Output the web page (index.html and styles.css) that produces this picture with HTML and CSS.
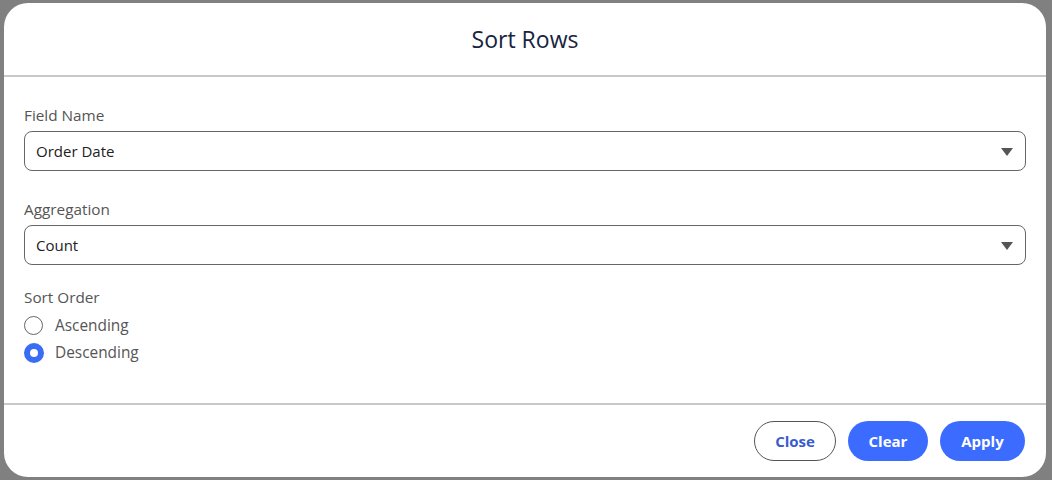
FILE: index.html
```html
<!DOCTYPE html>
<html lang="en">
<head>
    <meta charset="UTF-8">
    <meta name="viewport" content="width=device-width, initial-scale=1.0">
    <title>Sort Rows</title>
    <link rel="stylesheet" href="styles.css">
</head>
<body>
    <div class="dialog">
        <div class="dialog-header">
            <h1>Sort Rows</h1>
        </div>
        <div class="dialog-body">
            <label class="field-label" for="fieldName">Field Name</label>
            <div class="select-box" id="fieldName">
                <span>Order Date</span>
                <span class="caret"></span>
            </div>

            <label class="field-label gap-lg" for="aggregation">Aggregation</label>
            <div class="select-box" id="aggregation">
                <span>Count</span>
                <span class="caret"></span>
            </div>

            <div class="field-label gap-md">Sort Order</div>
            <div class="radio-row">
                <span class="radio"></span>
                <span>Ascending</span>
            </div>
            <div class="radio-row">
                <span class="radio checked"></span>
                <span>Descending</span>
            </div>
        </div>
        <div class="dialog-footer">
            <button class="btn btn-outline">Close</button>
            <button class="btn btn-primary">Clear</button>
            <button class="btn btn-primary">Apply</button>
        </div>
    </div>
</body>
</html>
```

FILE: styles.css
```css
body {
    font-family: "Open Sans", "Noto Sans", sans-serif;
    background-color: #808080;
    margin: 0;
    padding: 3px 6px 3px 4px;
}
.dialog {
    width: 1042px;
    height: 474px;
    background-color: #fff;
    border-radius: 24px;
    display: flex;
    flex-direction: column;
    overflow: hidden;
}
.dialog-header {
    height: 72px;
    flex-shrink: 0;
    border-bottom: 2px solid #c8c8c8;
    display: flex;
    align-items: center;
    justify-content: center;
}
h1 {
    margin: 0;
    font-size: 23px;
    font-weight: 400;
    color: #16243f;
}
.dialog-body {
    flex: 1;
    padding: 28px 20px 0 20px;
}
.field-label {
    display: block;
    font-size: 15.3px;
    line-height: 20px;
    color: #555;
    margin-bottom: 6px;
}
.gap-lg {
    margin-top: 28px;
}
.gap-md {
    margin-top: 22px;
    margin-bottom: 5px;
}
.select-box {
    height: 38px;
    border: 1px solid #666;
    border-radius: 8px;
    display: flex;
    align-items: center;
    justify-content: space-between;
    padding: 0 12px 0 11px;
    font-size: 15px;
    color: #222;
}
.caret {
    width: 0;
    height: 0;
    border-left: 6.5px solid transparent;
    border-right: 6.5px solid transparent;
    border-top: 8px solid #555;
    margin-top: 2px;
}
.radio-row {
    display: flex;
    align-items: center;
    gap: 11px;
    height: 27px;
    font-size: 15.4px;
    color: #555;
}
.radio {
    width: 17px;
    height: 17px;
    border: 1.5px solid #666;
    border-radius: 50%;
    box-sizing: content-box;
    display: inline-block;
    margin-right: 1px;
}
.radio.checked {
    width: 8px;
    height: 8px;
    border: 6px solid #3a6cf4;
    background-color: #fff;
    margin-right: 0;
}
.dialog-footer {
    border-top: 2px solid #c8c8c8;
    height: 74px;
    flex-shrink: 0;
    box-sizing: border-box;
    display: flex;
    align-items: center;
    justify-content: flex-end;
    gap: 12px;
    padding: 0 21px 0 0;
}
.btn {
    height: 40px;
    border-radius: 20px;
    font-family: "Open Sans", "Noto Sans", sans-serif;
    font-size: 15px;
    font-weight: 700;
    cursor: pointer;
}
.btn-outline {
    width: 82px;
    background-color: #fff;
    border: 1px solid #555;
    color: #3a5bd0;
}
.btn-primary {
    background-color: #3b6cff;
    border: none;
    color: #fff;
    width: 80px;
}
.btn-primary:last-child {
    width: 85px;
}
```
